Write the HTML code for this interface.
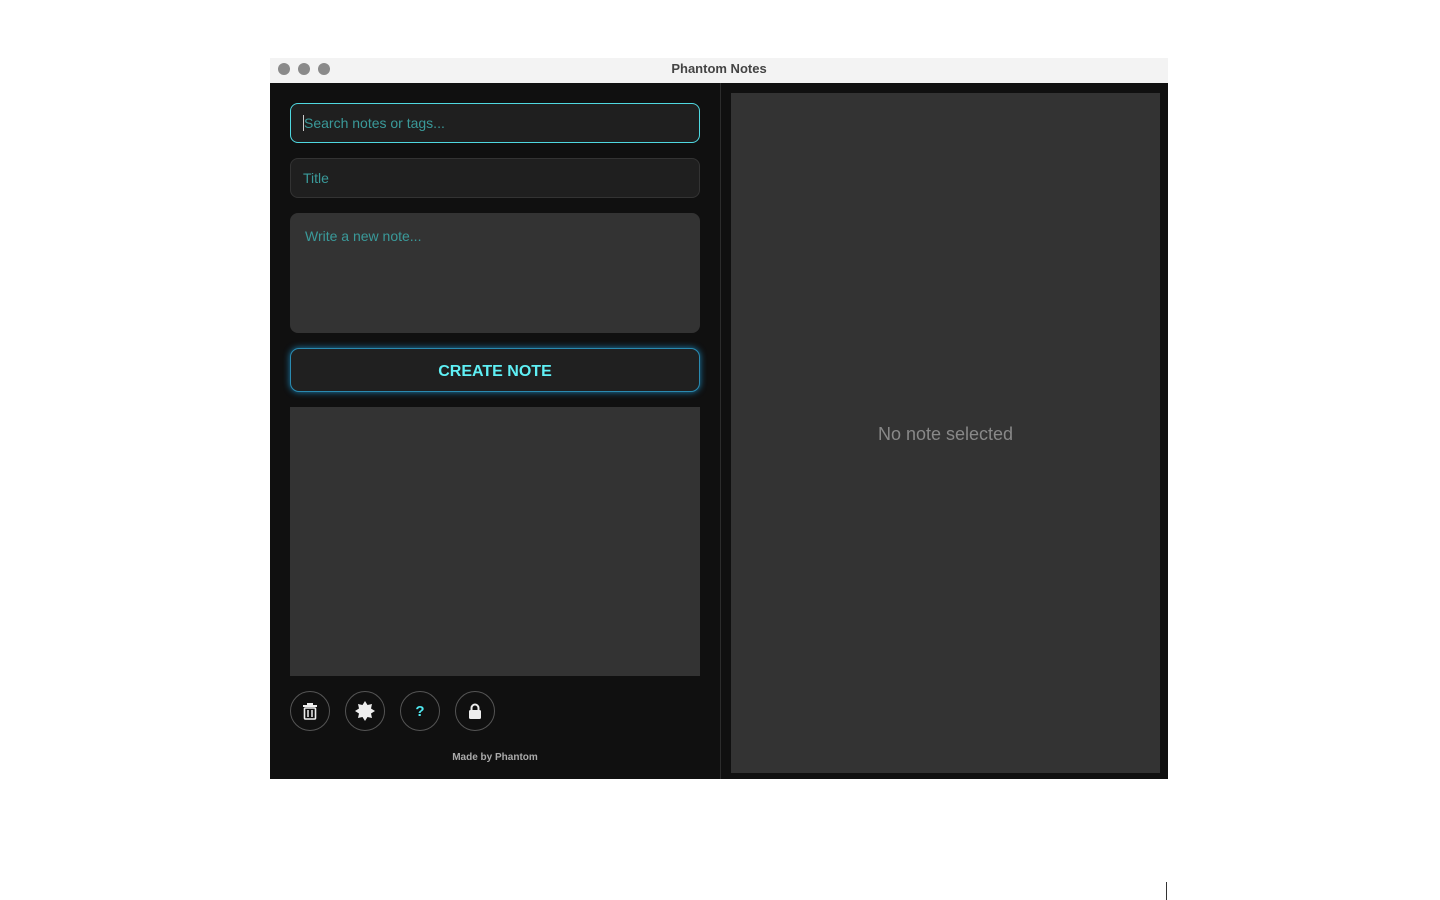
<!DOCTYPE html>
<html><head><style>
body{margin:0;width:1440px;height:900px;background:#fff;position:relative;font-family:"Liberation Sans",sans-serif;overflow:hidden}
.win{position:absolute;left:270px;top:58px;width:898px;height:721px;background:#101010}
.tb{height:25px;background:#f3f3f3;position:relative}
.dot{position:absolute;top:5px;width:12px;height:12px;border-radius:50%;background:#8a8a8a}
.tt{position:absolute;left:0;right:0;top:3px;text-align:center;font-size:13px;font-weight:bold;color:#444}
.a{position:absolute;box-sizing:border-box}
.in{border-radius:8px;background:#1f1f1f;border:1px solid #333;color:#3a9a9a;font-size:14px;padding-left:12px;line-height:38px}
.ic{width:40px;height:40px;border-radius:50%;border:1px solid #555;display:flex;align-items:center;justify-content:center;top:633px}
</style></head><body>
<div class="win">
<div class="tb"><div class="dot" style="left:8px"></div><div class="dot" style="left:28px"></div><div class="dot" style="left:48px"></div><div class="tt">Phantom Notes</div></div>
<div class="a in" style="left:20px;top:45px;width:410px;height:40px;border-color:#4fd8e0"><span style="border-left:1px solid #ccc"></span>Search notes or tags...</div>
<div class="a in" style="left:20px;top:100px;width:410px;height:40px">Title</div>
<div class="a in" style="left:20px;top:155px;width:410px;height:120px;background:#333;border:none;line-height:20px;padding:13px 15px">Write a new note...</div>
<div class="a" style="left:20px;top:290px;width:410px;height:44px;border-radius:9px;background:#202020;border:1px solid #2a8ab0;box-shadow:0 0 7px #1a7fb0;color:#5ff0f5;font-weight:bold;font-size:16px;text-align:center;line-height:45px">CREATE NOTE</div>
<div class="a" style="left:20px;top:349px;width:410px;height:269px;background:#333"></div>
<div class="a ic" style="left:20px"><svg width="16" height="18" viewBox="0 0 16 18"><rect x="1" y="3" width="14" height="2" fill="#eee"/><rect x="5" y="1" width="6" height="2" fill="#eee"/><rect x="2.5" y="6" width="11" height="11" rx="1" fill="none" stroke="#eee" stroke-width="1.6"/><path d="M6 8v7M10 8v7" stroke="#eee" stroke-width="1.5"/></svg></div>
<div class="a ic" style="left:75px"><svg width="22" height="22" viewBox="0 0 22 22"><polygon points="11,1 13.5,5 18,4 17,8.5 21,11 17,13.5 18,18 13.5,17 11,21 8.5,17 4,18 5,13.5 1,11 5,8.5 4,4 8.5,5" fill="#eee"/></svg></div>
<div class="a ic" style="left:130px;color:#4fe8f0;font-weight:bold;font-size:15px">?</div>
<div class="a ic" style="left:185px"><svg width="14" height="16" viewBox="0 0 14 16"><path d="M3.5 7V5a3.5 3.5 0 0 1 7 0v2" fill="none" stroke="#eee" stroke-width="2"/><rect x="1" y="7" width="12" height="9" rx="1.5" fill="#eee"/></svg></div>
<div class="a" style="left:20px;top:694px;width:410px;text-align:center;font-size:10px;font-weight:bold;color:#aaa">Made by Phantom</div>
<div class="a" style="left:450px;top:25px;width:1px;height:696px;background:#2c2c2c"></div>
<div class="a" style="left:461px;top:35px;width:429px;height:680px;background:#333;color:#888;font-size:18px;text-align:center;line-height:682px">No note selected</div>
</div>
<div class="a" style="left:1166px;top:882px;width:1px;height:18px;background:#333"></div>
</body></html>
